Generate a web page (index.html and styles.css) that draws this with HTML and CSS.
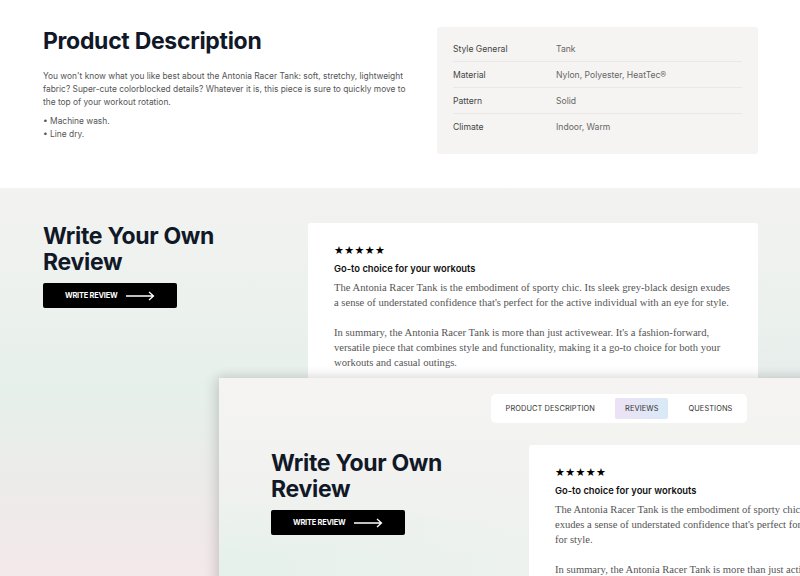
FILE: index.html
```html
<!DOCTYPE html>
<html lang="en">
<head>
<meta charset="utf-8">
<title>Antonia Racer Tank</title>
<link rel="stylesheet" href="styles.css">
</head>
<body>
<section class="desc">
  <div class="desc-text">
    <h1 class="title">Product Description</h1>
    <p class="lead">You won't know what you like best about the Antonia Racer Tank: soft, stretchy, lightweight fabric? Super-cute colorblocked details? Whatever it is, this piece is sure to quickly move to the top of your workout rotation.</p>
    <ul class="bullets">
      <li>Machine wash.</li>
      <li>Line dry.</li>
    </ul>
  </div>
  <div class="specs">
    <div class="spec-row"><span class="spec-label">Style General</span><span class="spec-value">Tank</span></div>
    <div class="spec-row"><span class="spec-label">Material</span><span class="spec-value">Nylon, Polyester, HeatTec®</span></div>
    <div class="spec-row"><span class="spec-label">Pattern</span><span class="spec-value">Solid</span></div>
    <div class="spec-row"><span class="spec-label">Climate</span><span class="spec-value">Indoor, Warm</span></div>
  </div>
</section>

<section class="reviews">
  <div class="review-row">
    <div class="write">
      <h2 class="write-title">Write Your Own Review</h2>
      <button class="write-btn">WRITE REVIEW
        <svg class="arrow" width="29" height="10" viewBox="0 0 29 10"><path d="M0 5H27.5M23 1L27.5 5L23 9" fill="none" stroke="#fff" stroke-width="1.3"/></svg>
      </button>
    </div>
    <article class="card">
      <div class="stars">★★★★★</div>
      <h3 class="card-title">Go-to choice for your workouts</h3>
      <p class="card-body">The Antonia Racer Tank is the embodiment of sporty chic. Its sleek grey-black design exudes a sense of understated confidence that's perfect for the active individual with an eye for style.</p>
      <p class="card-body">In summary, the Antonia Racer Tank is more than just activewear. It's a fashion-forward, versatile piece that combines style and functionality, making it a go-to choice for both your workouts and casual outings.</p>
    </article>
  </div>

  <div class="window">
    <nav class="tabs">
      <span class="tab">PRODUCT DESCRIPTION</span>
      <span class="tab tab-active">REVIEWS</span>
      <span class="tab">QUESTIONS</span>
    </nav>
    <div class="review-row review-row-window">
      <div class="write">
        <h2 class="write-title">Write Your Own Review</h2>
        <button class="write-btn">WRITE REVIEW
          <svg class="arrow" width="29" height="10" viewBox="0 0 29 10"><path d="M0 5H27.5M23 1L27.5 5L23 9" fill="none" stroke="#fff" stroke-width="1.3"/></svg>
        </button>
      </div>
      <article class="card card-window">
        <div class="stars">★★★★★</div>
        <h3 class="card-title">Go-to choice for your workouts</h3>
        <p class="card-body">The Antonia Racer Tank is the embodiment of sporty chic. Its sleek grey-black design exudes a sense of understated confidence that's perfect for the active individual with an eye for style.</p>
        <p class="card-body">In summary, the Antonia Racer Tank is more than just activewear. It's a fashion-forward, versatile piece that combines style and functionality, making it a go-to choice for both your workouts and casual outings.</p>
      </article>
    </div>
  </div>
</section>
</body>
</html>
```

FILE: styles.css
```css
* { box-sizing: border-box; }
html, body { margin: 0; padding: 0; }
body {
  width: 800px;
  height: 576px;
  overflow: hidden;
  background: #fff;
  font-family: Inter, "Liberation Sans", sans-serif;
  color: #111827;
}

/* ---------- description ---------- */
.desc {
  display: flex;
  height: 188px;
  padding: 27px 42px 0 43px;
  gap: 22px;
  background: #fff;
}
.desc-text { width: 372px; }
.title {
  margin: 0;
  padding-top: 1px;
  font-size: 23px;
  line-height: 26px;
  font-weight: 700;
  letter-spacing: -0.3px;
  color: #111827;
}
.lead {
  margin: 16px 0 0;
  font-size: 8.4px;
  line-height: 13px;
  color: #555;
}
.bullets {
  margin: 6px 0 0;
  padding: 0;
  list-style: none;
  font-size: 8.4px;
  line-height: 13px;
  color: #555;
}
.bullets li::before { content: "• "; }

.specs {
  width: 321px;
  height: 127px;
  background: #f5f4f2;
  border-radius: 3px;
  padding: 9px 16px 14px;
}
.spec-row {
  display: flex;
  align-items: center;
  height: 26px;
  font-size: 8.6px;
  border-bottom: 1px solid #e9e8e5;
}
.spec-row:last-child { border-bottom: none; }
.spec-label { width: 103px; color: #444; }
.spec-value { color: #666; }

/* ---------- reviews ---------- */
.reviews {
  position: relative;
  height: 388px;
  background:
    radial-gradient(ellipse 260px 220px at 800px 360px, rgba(225,224,235,0.9), rgba(225,224,235,0) 100%),
    linear-gradient(180deg, #f3f3f1 0%, #ebf1ed 35%, #e6f0eb 52%, #ecebea 75%, #f3e8ea 100%);
}
.review-row {
  display: flex;
  padding: 35px 42px 0 43px;
}
.write { width: 265px; }
.write-title {
  margin: 0;
  font-size: 23px;
  line-height: 26px;
  font-weight: 700;
  letter-spacing: -0.3px;
  color: #111827;
  width: 200px;
}
.write-btn {
  margin-top: 8px;
  display: flex;
  align-items: center;
  gap: 9px;
  width: 134px;
  height: 25px;
  padding: 0 0 0 22px;
  background: #000;
  color: #fff;
  border: none;
  border-radius: 2px;
  font-family: Inter, "Liberation Sans", sans-serif;
  font-size: 7.4px;
  font-weight: 700;
  letter-spacing: -0.2px;
}
.card {
  width: 450px;
  height: 200px;
  background: #fff;
  border-radius: 3px;
  padding: 21px 26px 0;
}
.stars {
  font-family: "DejaVu Sans", sans-serif;
  font-size: 11px;
  line-height: 14px;
  letter-spacing: 0.4px;
  color: #000;
}
.card-title {
  margin: 4px 0 0;
  font-size: 9.4px;
  line-height: 13px;
  font-weight: 600;
  color: #111;
}
.card-body {
  margin: 5px 0 15px;
  font-family: "Liberation Serif", "Times New Roman", serif;
  font-size: 10.6px;
  line-height: 15px;
  color: #555;
}
.card-body + .card-body { margin-top: 0; }

/* ---------- overlaid window ---------- */
.window {
  position: absolute;
  left: 219px;
  top: 190px;
  width: 800px;
  height: 300px;
  background:
    linear-gradient(180deg, #f5f4f2 0%, #f1f2ef 35%, rgba(241,242,239,0) 60%),
    linear-gradient(90deg, #e6f1ec 0%, #eef2ef 45%, #f1f1ef 100%);
  box-shadow: -4px 0 12px rgba(0,0,0,0.12), 0 -3px 10px rgba(0,0,0,0.06);
  padding-top: 16px;
}
.tabs {
  display: flex;
  gap: 10px;
  width: fit-content;
  margin: 0 auto;
  padding: 4px 5px;
  background: #fff;
  border-radius: 5px;
}
.tab {
  display: flex;
  align-items: center;
  height: 21px;
  padding: 0 10px;
  font-size: 7.4px;
  letter-spacing: 0.1px;
  color: #333;
  border-radius: 2px;
}
.tab-active {
  background: linear-gradient(90deg, #ede1f5 0%, #d8eaf6 100%);
}
.review-row-window {
  padding: 22px 0 0 52px;
}
.review-row-window .write { width: 258px; padding-top: 5px; }
.review-row-window .write-btn { margin-top: 8px; }
.card-window { width: 442px; }
```
